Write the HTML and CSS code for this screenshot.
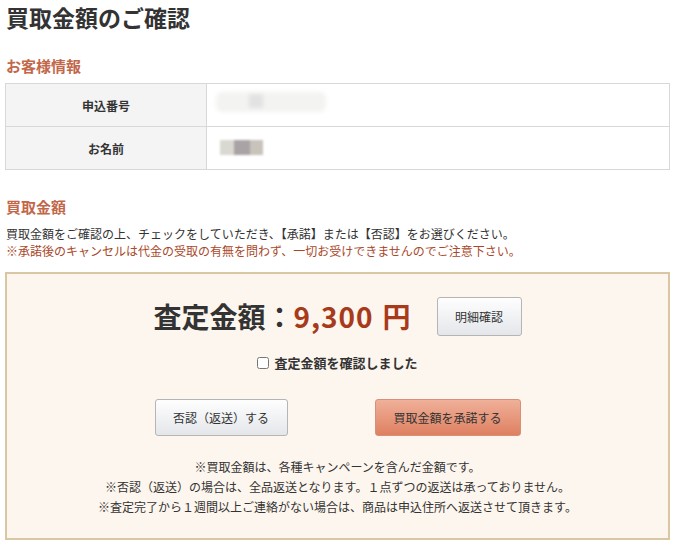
FILE: index.html
```html
<!DOCTYPE html>
<html lang="ja">

<head>
  <meta charset="utf-8">
  <title>買取金額のご確認</title>
  <link rel="stylesheet" href="styles.css">
</head>

<body>
  <div class="page">
    <h1>買取金額のご確認</h1>

    <h2 class="section-title customer">お客様情報</h2>
    <table class="info">
      <tr>
        <th>申込番号</th>
        <td>
          <div class="blur blur-number"><span></span></div>
        </td>
      </tr>
      <tr>
        <th>お名前</th>
        <td>
          <div class="blur blur-name"><span></span><span></span><span></span></div>
        </td>
      </tr>
    </table>

    <h2 class="section-title price">買取金額</h2>
    <p class="lead">買取金額をご確認の上、チェックをしていただき、【承諾】または【否認】をお選びください。</p>
    <p class="lead warn">※承諾後のキャンセルは代金の受取の有無を問わず、一切お受けできませんのでご注意下さい。</p>

    <div class="result">
      <div class="amount-row">
        <div class="amount">査定金額：<span class="yen"><span class="num">9,300</span>円</span></div>
        <button class="btn btn-gray btn-detail">明細確認</button>
      </div>
      <label class="confirm">
        <input type="checkbox">
        <span>査定金額を確認しました</span>
      </label>
      <div class="actions">
        <button class="btn btn-gray btn-deny">否認（返送）する</button>
        <button class="btn btn-accept">買取金額を承諾する</button>
      </div>
      <div class="notes">
        <p>※買取金額は、各種キャンペーンを含んだ金額です。</p>
        <p>※否認（返送）の場合は、全品返送となります。１点ずつの返送は承っておりません。</p>
        <p>※査定完了から１週間以上ご連絡がない場合は、商品は申込住所へ返送させて頂きます。</p>
      </div>
    </div>
  </div>
</body>

</html>
```

FILE: styles.css
```css
body {
  margin: 0;
  background-color: #fff;
  color: #333;
  font-family: 'Noto Sans CJK JP', 'Noto Sans', sans-serif;
}

.page {
  width: 665px;
  padding-left: 5px;
}

h1 {
  margin: 0;
  padding-left: 1px;
  font-size: 23px;
  line-height: 34px;
  font-weight: bold;
  color: #333;
}

.section-title {
  margin: 0;
  padding-left: 1px;
  font-size: 15px;
  line-height: 22px;
  font-weight: bold;
  color: #c2674a;
}

.section-title.customer {
  margin-top: 21px;
  margin-bottom: 6px;
}

.section-title.price {
  margin-top: 26px;
  margin-bottom: 7px;
}

/* customer info table */
.info {
  width: 100%;
  border-collapse: collapse;
  border: 1px solid #d8d8d8;
}

.info th,
.info td {
  height: 42px;
  padding: 0;
  border: 1px solid #d8d8d8;
  font-size: 12px;
}

.info th {
  width: 200px;
  background-color: #f4f4f4;
  font-weight: bold;
  text-align: center;
}

.info td {
  padding-left: 9px;
}

.blur {
  display: flex;
}

.blur-number {
  width: 110px;
  height: 20px;
  background-color: #f3f3f1;
  border-radius: 6px;
  filter: blur(2px);
  padding-left: 33px;
  box-sizing: border-box;
  margin-top: -6px;
}

.blur-number span {
  width: 14px;
  height: 14px;
  margin-top: 2px;
  background-color: #e2e2e2;
}

.blur-name {
  margin-left: 4px;
  margin-top: -2px;
  filter: blur(1px);
}

.blur-name span {
  width: 14px;
  height: 15px;
  background-color: #d9d8d1;
}

.blur-name span:nth-child(2) {
  width: 16px;
  background-color: #a9a3a6;
}

.blur-name span:nth-child(3) {
  width: 13px;
  background-color: #c8c3bb;
}

.lead {
  margin: 0;
  padding-left: 1px;
  font-size: 12px;
  line-height: 17px;
}

.lead.warn {
  color: #a9472a;
}

/* assessment box */
.result {
  margin-top: 13px;
  border: 2px solid #d9c6a2;
  background-color: #fdf6ee;
  padding: 23px 0 21px;
  display: flex;
  flex-direction: column;
  align-items: center;
}

.amount-row {
  display: flex;
  align-items: center;
  gap: 26px;
  height: 39px;
}

.amount {
  font-size: 28px;
  line-height: 39px;
  font-weight: bold;
  color: #333;
}

.amount .yen {
  color: #a83a1c;
}

.amount .num {
  letter-spacing: 1px;
  margin-right: 9px;
}

.btn {
  font-family: 'Noto Sans CJK JP', 'Noto Sans', sans-serif;
  font-size: 12px;
  color: #333;
  border-radius: 3px;
  cursor: pointer;
}

.btn-gray {
  background: linear-gradient(#fefefe, #e4e6ea);
  border: 1px solid #b5b5b5;
}

.btn-detail {
  width: 85px;
  height: 39px;
}

.confirm {
  margin-top: 17px;
  display: flex;
  align-items: center;
  gap: 5px;
  font-size: 13px;
  line-height: 20px;
  font-weight: bold;
}

.confirm input {
  margin: 0;
  width: 12px;
  height: 12px;
}

.actions {
  margin-top: 26px;
  display: flex;
  gap: 87px;
}

.btn-deny {
  width: 133px;
  height: 37px;
}

.btn-accept {
  width: 146px;
  height: 37px;
  background: linear-gradient(#f0b099, #de8061);
  border: 1px solid #d49178;
}

.notes {
  margin-top: 21px;
  text-align: center;
  font-size: 12px;
  line-height: 20px;
}

.notes p {
  margin: 0;
}
```
